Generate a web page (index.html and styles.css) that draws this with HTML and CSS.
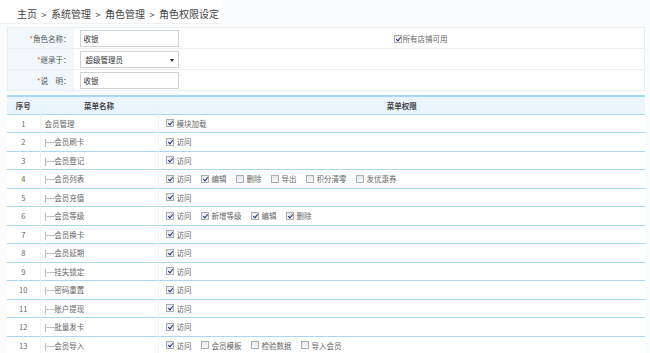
FILE: index.html
```html
<!DOCTYPE html>
<html lang="zh-CN">
  <head>
    <meta charset="UTF-8" />
    <title>角色权限设定</title>
    <link rel="stylesheet" href="styles.css">
  </head>
  <body>
    <div class="crumb">主页<span class="sep">&gt;</span>系统管理<span class="sep">&gt;</span>角色管理<span class="sep">&gt;</span>角色权限设定</div>

    <div class="page">
      <!-- 角色信息 -->
      <table class="form">
        <tr>
          <th><i>*</i>角色名称：</th>
          <td class="field"><input type="text" class="txt" value="收银" /></td>
          <td class="extra"><span class="cb on"></span>所有店铺可用</td>
        </tr>
        <tr>
          <th><i>*</i>继承于：</th>
          <td class="field"><div class="sel">超级管理员<b></b></div></td>
          <td></td>
        </tr>
        <tr>
          <th><i>*</i>说　明：</th>
          <td class="field"><input type="text" class="txt" value="收银" /></td>
          <td></td>
        </tr>
      </table>

      <!-- 菜单权限 -->
      <table class="grid">
        <thead>
          <tr>
            <th class="no">序号</th>
            <th class="name">菜单名称</th>
            <th class="perm">菜单权限</th>
          </tr>
        </thead>
        <tbody id="menuRows"></tbody>
      </table>
    </div>

    <script>
      var menus = [
        { name: '会员管理', top: true, perms: [['模块加载', 1]] },
        { name: '会员刷卡', perms: [['访问', 1]] },
        { name: '会员登记', perms: [['访问', 1]] },
        { name: '会员列表', perms: [['访问', 1], ['编辑', 1], ['删除', 0], ['导出', 0], ['积分清零', 0], ['发优惠券', 0]] },
        { name: '会员充值', perms: [['访问', 1]] },
        { name: '会员等级', perms: [['访问', 1], ['新增等级', 1], ['编辑', 1], ['删除', 1]] },
        { name: '会员换卡', perms: [['访问', 1]] },
        { name: '会员延期', perms: [['访问', 1]] },
        { name: '挂失锁定', perms: [['访问', 1]] },
        { name: '密码重置', perms: [['访问', 1]] },
        { name: '账户提现', perms: [['访问', 1]] },
        { name: '批量发卡', perms: [['访问', 1]] },
        { name: '会员导入', perms: [['访问', 1], ['会员模板', 0], ['检验数据', 0], ['导入会员', 0]] }
      ];

      var tbody = document.getElementById('menuRows');
      menus.forEach(function (m, i) {
        var tr = document.createElement('tr');
        var html = '<td class="no">' + (i + 1) + '</td>';
        html += '<td class="name">' + (m.top ? '' : '|---') + m.name + '</td><td class="perm">';
        m.perms.forEach(function (p) {
          html += '<label class="opt"><span class="cb' + (p[1] ? ' on' : '') + '"></span>' + p[0] + '</label>';
        });
        tr.innerHTML = html + '</td>';
        tbody.appendChild(tr);
      });
    </script>
  </body>
</html>
```

FILE: styles.css
```css
* {
  box-sizing: border-box;
}

body {
  margin: 0;
  background: #fbfcfd;
  color: #555;
  font-family: "Noto Sans CJK SC", "Noto Sans", sans-serif;
  font-size: 7.5px;
}

.crumb {
  width: 222px;
  height: 24px;
  padding: 7px 0 0 17px;
  font-size: 10px;
  line-height: 14px;
  color: #444;
  white-space: nowrap;
  background: #fff;
  border-bottom: 1px solid #eef1f3;
}

.crumb .sep {
  display: inline-block;
  width: 14px;
  text-align: center;
  font-size: 9px;
}

.page {
  padding: 3px 5px 0 7px;
}

table {
  width: 100%;
  border-collapse: collapse;
  background: #fff;
}

/* 角色信息 */
.form {
  border: 1px solid #eceff1;
}

.form tr {
  height: 21px;
  border-bottom: 1px solid #eceff1;
}

.form th {
  width: 66px;
  padding: 0 3px 0 0;
  text-align: right;
  font-weight: normal;
  color: #555;
  background: #f1f7fb;
  white-space: nowrap;
}

.form th i {
  font-style: normal;
  color: #f0522f;
}

.form .field {
  width: 250px;
  padding: 0 0 0 6px;
}

.txt,
.sel {
  display: block;
  width: 99px;
  height: 17px;
  border: 1px solid #cfd3d6;
  background: #fff;
  padding: 0 3px;
  font-family: inherit;
  font-size: 7.5px;
  color: #333;
  line-height: 15px;
}

.sel {
  position: relative;
  padding-left: 5px;
}

.sel b {
  position: absolute;
  right: 4px;
  top: 7px;
  border: 2.5px solid transparent;
  border-top: 3px solid #222;
  border-bottom: 0;
}

.form .extra {
  padding-left: 70px;
  color: #666;
}

.form .extra .cb {
  margin-right: 1px;
}

/* 菜单权限 */
.grid {
  margin-top: 4px;
  border-top: 2px solid #a8d8f4;
}

.grid thead tr {
  height: 18px;
  background: #eaf5fd;
  border-bottom: 1px solid #a8d8f4;
}

.grid th {
  font-weight: bold;
  color: #444;
  text-align: center;
}

.grid tbody tr {
  height: 18.5px;
  border-bottom: 1px solid #a8d8f4;
}

.grid td {
  padding: 0;
  color: #666;
  white-space: nowrap;
}

.grid .no {
  width: 33px;
  text-align: center;
  border-right: 1px solid #eef3f6;
}

.grid .name {
  width: 118px;
  border-right: 1px solid #eef3f6;
}

.grid td.name {
  padding-left: 4px;
}

.grid td.perm {
  padding-left: 7px;
}

.opt {
  display: inline-flex;
  align-items: center;
  margin-right: 9px;
}

.cb {
  display: inline-block;
  position: relative;
  width: 8px;
  height: 8px;
  margin-right: 3px;
  border: 1px solid #a9adb1;
  background: linear-gradient(#e6e8ea, #f8f9fa);
  vertical-align: -1px;
}

.cb.on::after {
  content: "";
  position: absolute;
  left: 2px;
  top: 0;
  width: 2px;
  height: 4px;
  border: solid #22307a;
  border-width: 0 1.7px 1.7px 0;
  transform: rotate(40deg);
}
```
